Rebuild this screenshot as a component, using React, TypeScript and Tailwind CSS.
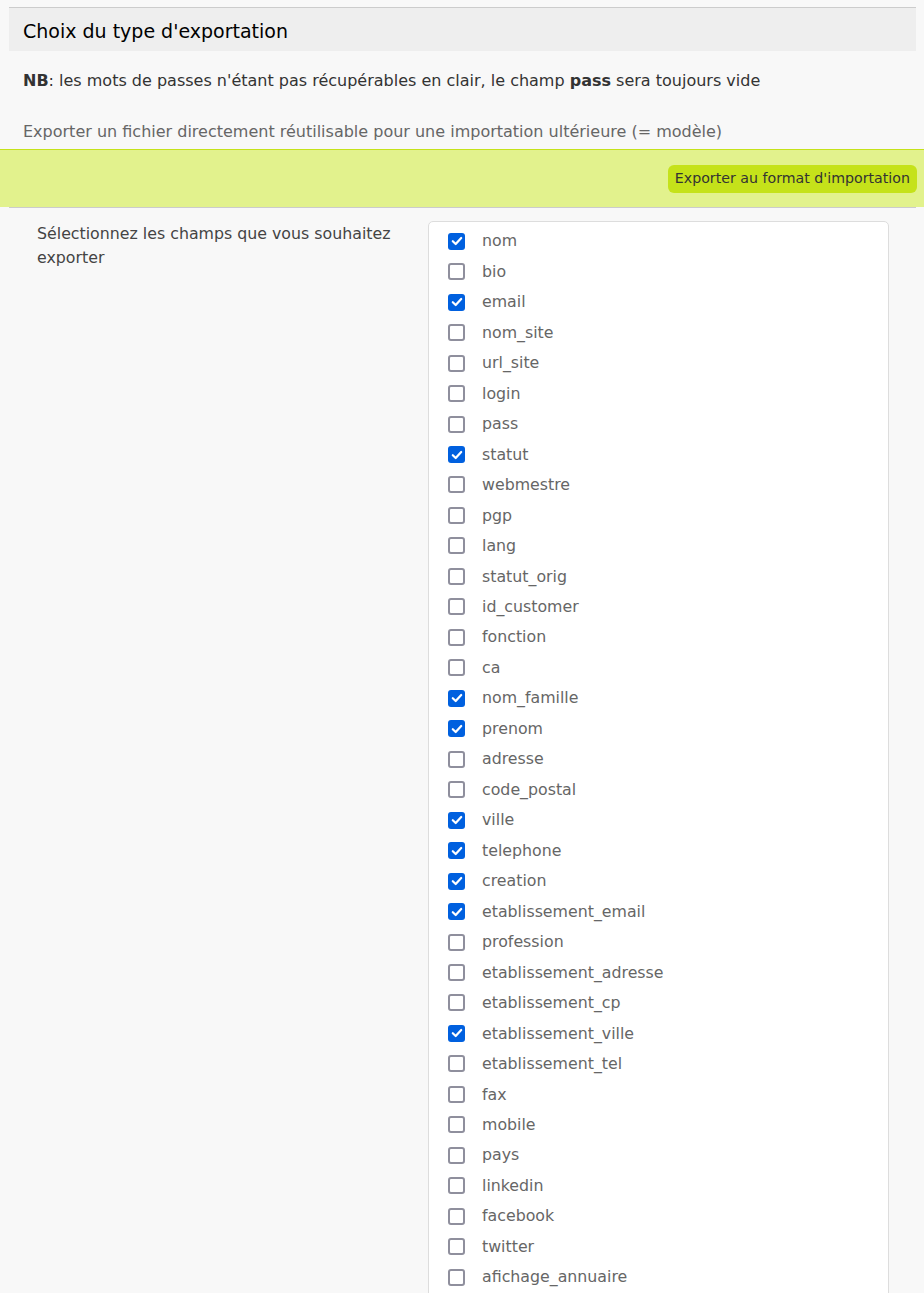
const fields: [string, boolean][] = [
  ["nom", true],
  ["bio", false],
  ["email", true],
  ["nom_site", false],
  ["url_site", false],
  ["login", false],
  ["pass", false],
  ["statut", true],
  ["webmestre", false],
  ["pgp", false],
  ["lang", false],
  ["statut_orig", false],
  ["id_customer", false],
  ["fonction", false],
  ["ca", false],
  ["nom_famille", true],
  ["prenom", true],
  ["adresse", false],
  ["code_postal", false],
  ["ville", true],
  ["telephone", true],
  ["creation", true],
  ["etablissement_email", true],
  ["profession", false],
  ["etablissement_adresse", false],
  ["etablissement_cp", false],
  ["etablissement_ville", true],
  ["etablissement_tel", false],
  ["fax", false],
  ["mobile", false],
  ["pays", false],
  ["linkedin", false],
  ["facebook", false],
  ["twitter", false],
  ["afichage_annuaire", false],
];

function Box({ checked }: { checked: boolean }) {
  return checked ? (
    <span className="w-[17px] h-[17px] rounded-[3px] bg-[#0060df] flex items-center justify-center shrink-0">
      <svg width="12" height="12" viewBox="0 0 12 12" fill="none">
        <path d="M1.8 6.2 L4.7 9 L10.2 3" stroke="white" strokeWidth="2.2" strokeLinecap="round" strokeLinejoin="round" />
      </svg>
    </span>
  ) : (
    <span className="w-[17px] h-[17px] rounded-[3px] border-2 border-[#8f8f9d] bg-white shrink-0" />
  );
}

export default function App() {
  return (
    <div className="h-[1293px] bg-[#f8f8f8] pt-[7px] font-['DejaVu_Sans',sans-serif] overflow-hidden">
      <div className="ml-[9px] mr-[8px] border-t border-[#cccccc] bg-[#eeeeee] h-[44px] flex items-center pt-[3px] px-[14px]">
        <h2 className="text-[19px] text-black">Choix du type d'exportation</h2>
      </div>
      <p className="px-[23px] pt-[18px] text-[16px] text-[#333]">
        <b>NB</b>: les mots de passes n'étant pas récupérables en clair, le champ <b>pass</b> sera toujours vide
      </p>
      <p className="px-[23px] pt-[27px] text-[16px] text-[#666]">
        Exporter un fichier directement réutilisable pour une importation ultérieure (= modèle)
      </p>
      <div className="mt-[5px] bg-[#e2f28d] border-t border-[#c5e21a] h-[58px] flex items-center justify-end pr-[7px]">
        <button className="bg-[#c5e21a] rounded-[6px] h-[28px] px-[7px] text-[14.2px] text-[#333]">
          Exporter au format d'importation
        </button>
      </div>
      <div className="ml-[9px] mr-[8px] border-t border-[#cccccc]" />
      <div className="flex pt-[13px]">
        <div className="w-[428px] pl-[37px] pr-[30px] pt-[1px] text-[15.8px] leading-[24px] text-[#444]">
          Sélectionnez les champs que vous souhaitez exporter
        </div>
        <div className="w-[461px] bg-white border border-[#dddddd] rounded-[5px] pt-[4px] pb-[20px] pl-[19px]">
          {fields.map(([name, checked]) => (
            <div key={name} className="h-[30.47px] flex items-center gap-[17px]">
              <Box checked={checked} />
              <span className="text-[15.8px] text-[#666]">{name}</span>
            </div>
          ))}
        </div>
      </div>
    </div>
  );
}
